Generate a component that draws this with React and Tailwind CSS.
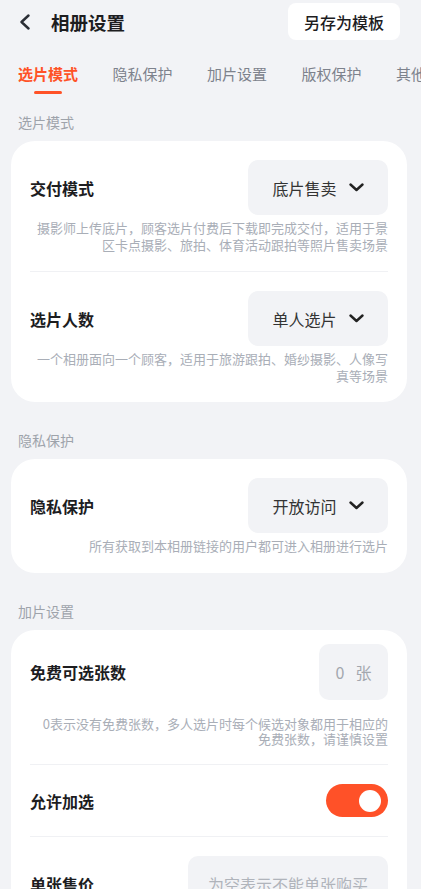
import React from "react";

function Chevron() {
  return (
    <svg width="15" height="9" viewBox="0 0 15 9" fill="none">
      <polyline points="1.5,1.5 7.5,7 13.5,1.5" stroke="#222" strokeWidth="2.4" strokeLinecap="round" strokeLinejoin="round" />
    </svg>
  );
}

function Select({ value }) {
  return (
    <div className="flex h-[55px] w-[140px] items-center justify-center gap-[12px] rounded-[10px] bg-[#f2f3f6]">
      <span className="text-[16px] leading-[20px] text-[#333]">{value}</span>
      <Chevron />
    </div>
  );
}

function Desc({ children, lh = "leading-[17px]", mt = "mt-[4px]" }) {
  return (
    <p className={`${mt} ${lh} text-right text-[13px] text-[#a9aeb7]`}>{children}</p>
  );
}

function Label({ children }) {
  return <span className="text-[16px] font-semibold leading-[20px] text-[#1d1d1f]">{children}</span>;
}

function SectionTitle({ children }) {
  return <div className="mb-[9px] pl-[18px] text-[14px] leading-[20px] text-[#9ea3ab]">{children}</div>;
}

function Divider() {
  return <div className="h-px bg-[#f0f1f4]" />;
}

export default function App() {
  const tabs = ["选片模式", "隐私保护", "加片设置", "版权保护", "其他设置"];
  return (
    <div className="min-h-screen overflow-hidden bg-[#f2f3f6] pb-[20px] font-['Noto_Sans_CJK_SC',sans-serif]">
      {/* Header */}
      <div className="flex h-[43px] items-center justify-between pl-[19px] pr-[21px]">
        <div className="flex items-center gap-[20px]">
          <svg width="12" height="16" viewBox="0 0 12 16" fill="none">
            <polyline points="9.5,1.5 2.5,8 9.5,14.5" stroke="#2a2e35" strokeWidth="2.4" strokeLinecap="round" strokeLinejoin="round" />
          </svg>
          <span className="text-[18.5px] font-semibold leading-[24px] text-[#1d1d1f]">相册设置</span>
        </div>
        <div className="flex h-[37px] w-[112px] items-center justify-center rounded-[8px] bg-white text-[16px] font-medium text-[#1d1d1f]">
          另存为模板
        </div>
      </div>

      {/* Tabs */}
      <div className="flex gap-[34.5px] overflow-hidden whitespace-nowrap pl-[18px] pt-[21px]">
        {tabs.map((t, i) => (
          <div key={t} className="flex shrink-0 flex-col items-center">
            <span className={`text-[15px] leading-[20px] ${i === 0 ? "font-semibold text-[#ff5227]" : "text-[#7d828c]"}`}>{t}</span>
            <div className={`mt-[7px] h-[3px] w-[28px] rounded-full ${i === 0 ? "bg-[#ff5227]" : "bg-transparent"}`} />
          </div>
        ))}
      </div>

      {/* Section 1 */}
      <div className="mt-[18px]">
        <SectionTitle>选片模式</SectionTitle>
        <div className="mx-[11px] w-[396px] rounded-[24px] bg-white px-[19px]">
          <div className="pb-[18px] pt-[19px]">
            <div className="flex items-center justify-between">
              <Label>交付模式</Label>
              <Select value="底片售卖" />
            </div>
            <Desc>摄影师上传底片，顾客选片付费后下载即完成交付，适用于景<br />区卡点摄影、旅拍、体育活动跟拍等照片售卖场景</Desc>
          </div>
          <Divider />
          <div className="pb-[18px] pt-[19px]">
            <div className="flex items-center justify-between">
              <Label>选片人数</Label>
              <Select value="单人选片" />
            </div>
            <Desc>一个相册面向一个顾客，适用于旅游跟拍、婚纱摄影、人像写<br />真等场景</Desc>
          </div>
        </div>
      </div>

      {/* Section 2 */}
      <div className="mt-[28px]">
        <SectionTitle>隐私保护</SectionTitle>
        <div className="mx-[11px] w-[396px] rounded-[24px] bg-white px-[19px]">
          <div className="pb-[19px] pt-[19px]">
            <div className="flex items-center justify-between">
              <Label>隐私保护</Label>
              <Select value="开放访问" />
            </div>
            <Desc>所有获取到本相册链接的用户都可进入相册进行选片</Desc>
          </div>
        </div>
      </div>

      {/* Section 3 */}
      <div className="mt-[28px]">
        <SectionTitle>加片设置</SectionTitle>
        <div className="mx-[11px] w-[396px] rounded-[24px] bg-white px-[19px]">
          <div className="pb-[18px] pt-[14px]">
            <div className="flex items-center justify-between">
              <Label>免费可选张数</Label>
              <div className="flex h-[56px] w-[69px] items-center justify-center gap-[11px] rounded-[10px] bg-[#f2f3f6] text-[16px] text-[#a3a7ae]">
                <span>0</span>
                <span>张</span>
              </div>
            </div>
            <Desc mt="mt-[16px]" lh="leading-[15px]">0表示没有免费张数，多人选片时每个候选对象都用于相应的<br />免费张数，请谨慎设置</Desc>
          </div>
          <Divider />
          <div className="flex items-center justify-between py-[19px]">
            <Label>允许加选</Label>
            <div className="flex h-[33px] w-[62px] items-center justify-end rounded-full bg-[#ff5128] pr-[7px]">
              <div className="h-[22px] w-[22px] rounded-full bg-white" />
            </div>
          </div>
          <Divider />
          <div className="flex items-center justify-between pb-[19px] pt-[19px]">
            <Label>单张售价</Label>
            <div className="flex h-[55px] w-[200px] items-center justify-center rounded-[10px] bg-[#f2f3f6] text-[16px] text-[#b0b4bb]">
              为空表示不能单张购买
            </div>
          </div>
        </div>
      </div>
    </div>
  );
}
